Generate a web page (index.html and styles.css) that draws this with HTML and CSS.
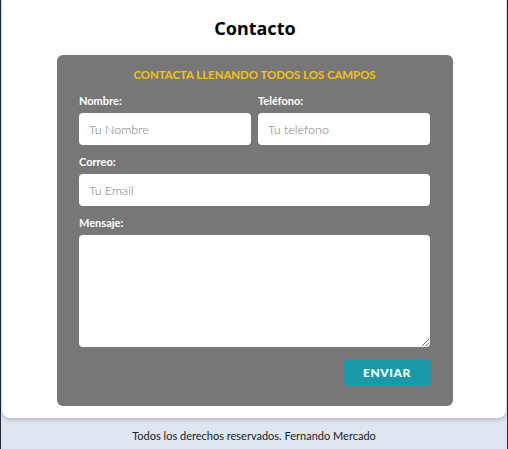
FILE: index.html
```html
<!DOCTYPE html>
<html lang="es">
<head>
<meta charset="utf-8">
<title>Contacto</title>
<link rel="stylesheet" href="styles.css">
</head>
<body>
<div class="frame">
  <main class="card">
    <h1 class="heading">Contacto</h1>
    <form class="form">
      <h2 class="form-title">CONTACTA LLENANDO TODOS LOS CAMPOS</h2>
      <div class="row">
        <div class="field">
          <label class="label">Nombre:</label>
          <input class="input" type="text" placeholder="Tu Nombre">
        </div>
        <div class="field">
          <label class="label">Teléfono:</label>
          <input class="input" type="text" placeholder="Tu teléfono">
        </div>
      </div>
      <div class="field">
        <label class="label">Correo:</label>
        <input class="input" type="email" placeholder="Tu Email">
      </div>
      <div class="field">
        <label class="label">Mensaje:</label>
        <textarea class="textarea"></textarea>
      </div>
      <div class="actions">
        <button class="button" type="button">ENVIAR</button>
      </div>
    </form>
  </main>
  <footer class="footer">Todos los derechos reservados. Fernando Mercado</footer>
</div>
</body>
</html>
```
FILE: styles.css
```css
* { box-sizing: border-box; }
html, body { margin: 0; padding: 0; }
body {
  background: #dfe6ef;
  font-family: Lato, "Noto Sans", sans-serif;
  height: 449px;
  overflow: hidden;
}
.frame {
  height: 449px;
  border-left: 1px solid #1e2b3b;
  border-right: 1px solid #1e2b3b;
  padding: 0 1px;
}
.card {
  background: #fff;
  height: 418px;
  border-radius: 0 0 8px 8px;
  box-shadow: 0 2px 4px rgba(0,0,0,0.18);
  padding: 16px 0 0 2px;
}
.heading {
  margin: 0;
  text-align: center;
  font-family: "Noto Sans", sans-serif;
  font-size: 18px;
  font-weight: 700;
  line-height: 24px;
  color: #000;
}
.form {
  width: 396px;
  margin: 15px auto 0;
  background: #777;
  border-radius: 6px;
  padding: 13px 23px 20px 22px;
  display: flex;
  flex-direction: column;
  gap: 10px;
}
.form-title {
  margin: 0 0 2px;
  text-align: center;
  color: #f5c218;
  font-size: 11.4px;
  font-weight: 700;
  line-height: 14px;
}
.row {
  display: flex;
  gap: 7px;
}
.row .field { flex: 1; min-width: 0; }
.field {
  display: flex;
  flex-direction: column;
  gap: 5px;
}
.label {
  color: #fff;
  font-size: 11px;
  font-weight: 700;
  line-height: 14px;
}
.input, .textarea {
  width: 100%;
  min-width: 0;
  border: none;
  border-radius: 4px;
  background: #fff;
  font-family: Lato, sans-serif;
  font-size: 12.5px;
  font-weight: 300;
  padding: 0 10px;
  outline: none;
}
.input { height: 32px; }
.textarea { height: 112px; resize: vertical; }
.input::placeholder { color: #7a7a7a; }
.actions {
  display: flex;
  justify-content: flex-end;
  margin-top: 2px;
}
.button {
  width: 86px;
  height: 27px;
  border: none;
  border-radius: 4px;
  background: #1a9aa8;
  color: #fff;
  font-family: Lato, sans-serif;
  font-size: 12px;
  font-weight: 900;
  letter-spacing: 0.6px;
}
.footer {
  text-align: center;
  font-size: 11px;
  color: #222;
  padding-top: 11px;
  line-height: 14px;
}
```
